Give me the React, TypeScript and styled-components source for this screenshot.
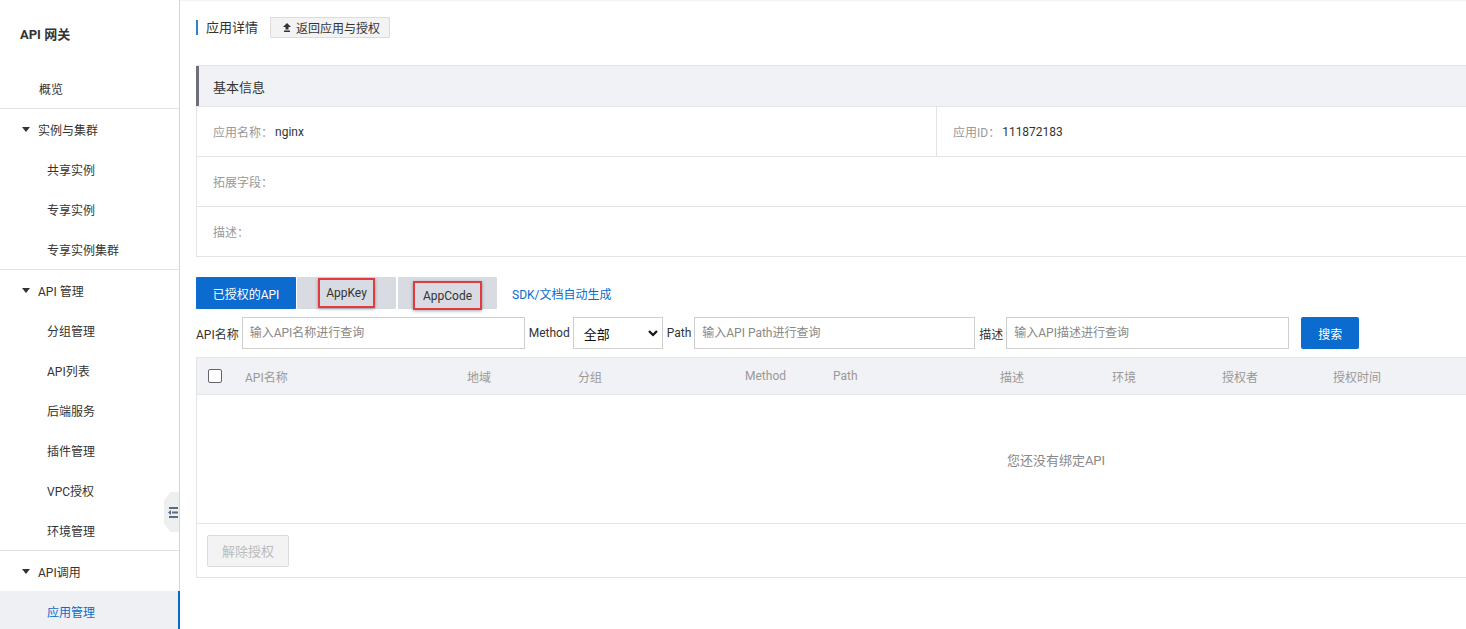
import { FC } from 'react';
import styled, { createGlobalStyle } from 'styled-components';

const GlobalStyle = createGlobalStyle`
  html, body {
    margin: 0;
    padding: 0;
    background: #fff;
    overflow: hidden;
  }
  body {
    font-family: Roboto, "Noto Sans CJK SC", sans-serif;
    font-size: 12px;
    color: #333;
  }
  * {
    box-sizing: border-box;
  }
`;

type NavItem = { label: string; active?: boolean };
type NavGroup = { title?: string; items: NavItem[] };

const nav: NavGroup[] = [
  { items: [{ label: '概览' }] },
  { title: '实例与集群', items: [{ label: '共享实例' }, { label: '专享实例' }, { label: '专享实例集群' }] },
  {
    title: 'API 管理',
    items: [
      { label: '分组管理' },
      { label: 'API列表' },
      { label: '后端服务' },
      { label: '插件管理' },
      { label: 'VPC授权' },
      { label: '环境管理' },
    ],
  },
  { title: 'API调用', items: [{ label: '应用管理', active: true }] },
];

const columns = ['API名称', '地域', '分组', 'Method', 'Path', '描述', '环境', '授权者', '授权时间'];

const App: FC = () => {
  return (
    <>
      <GlobalStyle />
      <Layout>
        <Sidebar>
          <Brand>API 网关</Brand>
          {nav.map((group, gi) => (
            <Group key={gi} last={gi === nav.length - 1}>
              {group.title && (
                <GroupTitle>
                  <Caret />
                  {group.title}
                </GroupTitle>
              )}
              {group.items.map(item => (
                <NavLink key={item.label} sub={!!group.title} active={item.active}>
                  {item.label}
                </NavLink>
              ))}
            </Group>
          ))}
          <CollapseHandle>
            <svg width="10" height="11" viewBox="0 0 10 11">
              <rect x="1" y="0" width="9" height="2" fill="#5b6b82" />
              <rect x="4" y="4.5" width="6" height="2" fill="#5b6b82" />
              <path d="M0 5.5 L3 3 L3 8 Z" fill="#5b6b82" />
              <rect x="1" y="9" width="9" height="2" fill="#5b6b82" />
            </svg>
          </CollapseHandle>
        </Sidebar>

        <Main>
          <TitleRow>
            <PageTitle>应用详情</PageTitle>
            <BackButton>
              <svg width="8" height="9" viewBox="0 0 8 9">
                <path d="M4 0 L8 4 L5.5 4 L5.5 6.5 L2.5 6.5 L2.5 4 L0 4 Z" fill="#333" />
                <rect x="1" y="7.5" width="6" height="1.5" fill="#333" />
              </svg>
              返回应用与授权
            </BackButton>
          </TitleRow>

          <Panel>
            <PanelHeader>基本信息</PanelHeader>
            <InfoRow>
              <InfoCell width="740px" divided>
                <Label>应用名称：</Label>
                <Value>nginx</Value>
              </InfoCell>
              <InfoCell>
                <Label>应用ID：</Label>
                <Value>111872183</Value>
              </InfoCell>
            </InfoRow>
            <InfoRow>
              <InfoCell>
                <Label>拓展字段：</Label>
              </InfoCell>
            </InfoRow>
            <InfoRow>
              <InfoCell>
                <Label>描述：</Label>
              </InfoCell>
            </InfoRow>
          </Panel>

          <Tabs>
            <Tab active>已授权的API</Tab>
            <Tab>
              <Marked>AppKey</Marked>
            </Tab>
            <Tab spaced>
              <Marked tall>AppCode</Marked>
            </Tab>
            <TabLink>SDK/文档自动生成</TabLink>
          </Tabs>

          <FilterRow>
            <FilterLabel>API名称</FilterLabel>
            <TextInput width="283px" placeholder="输入API名称进行查询" />
            <FilterLabel>Method</FilterLabel>
            <Select>
              <span>全部</span>
              <svg width="10" height="7" viewBox="0 0 10 7">
                <path d="M1 1 L5 5 L9 1" stroke="#111" strokeWidth="2.2" fill="none" />
              </svg>
            </Select>
            <FilterLabel>Path</FilterLabel>
            <TextInput width="281px" placeholder="输入API Path进行查询" />
            <FilterLabel>描述</FilterLabel>
            <TextInput width="283px" placeholder="输入API描述进行查询" />
            <SearchButton>搜索</SearchButton>
          </FilterRow>

          <Table>
            <TableHead>
              <HeadCell>
                <Checkbox />
              </HeadCell>
              {columns.map(c => (
                <HeadCell key={c}>{c}</HeadCell>
              ))}
            </TableHead>
            <EmptyBody>您还没有绑定API</EmptyBody>
            <TableFooter>
              <DisabledButton disabled>解除授权</DisabledButton>
            </TableFooter>
          </Table>
        </Main>
      </Layout>
    </>
  );
};

const Layout = styled.div`
  display: flex;
  height: 100vh;
  width: 100vw;
  overflow: hidden;
  box-shadow: inset 0 2px 2px -1px rgba(0, 0, 0, 0.06);
`;

const Sidebar = styled.aside`
  position: relative;
  flex: 0 0 180px;
  border-right: 1px solid #d5d6d8;
  background: #fff;
`;

const Brand = styled.div`
  height: 68px;
  padding: 24px 0 0 20px;
  font-size: 13px;
  font-weight: bold;
  color: #333;
`;

const Group = styled.div<{ last?: boolean }>`
  border-bottom: ${p => (p.last ? 'none' : '1px solid #e2e3e5')};
`;

const GroupTitle = styled.div`
  display: flex;
  align-items: center;
  height: 40px;
  padding-left: 22px;
  color: #333;
`;

const Caret = styled.span`
  width: 0;
  height: 0;
  border-left: 4.5px solid transparent;
  border-right: 4.5px solid transparent;
  border-top: 5px solid #333;
  margin-right: 8px;
`;

const NavLink = styled.div<{ sub?: boolean; active?: boolean }>`
  display: flex;
  align-items: center;
  height: 40px;
  padding-left: ${p => (p.sub ? '47px' : '39px')};
  color: ${p => (p.active ? '#0a6bcc' : '#333')};
  background: ${p => (p.active ? '#eef0f4' : 'transparent')};
  border-right: ${p => (p.active ? '2px solid #0a6bcc' : 'none')};
  margin-right: ${p => (p.active ? '-1px' : '0')};
`;

const CollapseHandle = styled.div`
  position: absolute;
  right: 0;
  top: 492px;
  width: 15px;
  height: 40px;
  background: #eeefef;
  clip-path: polygon(40% 0, 100% 0, 100% 100%, 40% 100%, 0 78%, 0 22%);
  display: flex;
  align-items: center;
  justify-content: flex-end;
  padding-right: 1px;
`;

const Main = styled.main`
  flex: 1;
  min-width: 0;
  padding: 17px 0 0 16px;
  overflow: hidden;
`;

const TitleRow = styled.div`
  display: flex;
  align-items: center;
  gap: 12px;
  height: 21px;
`;

const PageTitle = styled.h1`
  margin: 0;
  font-size: 13px;
  font-weight: normal;
  color: #333;
  border-left: 2px solid #2f80cf;
  padding-left: 8px;
  line-height: 15px;
`;

const BackButton = styled.button`
  display: flex;
  align-items: center;
  gap: 5px;
  height: 21px;
  padding: 0 9px 0 12px;
  border: 1px solid #dcdcdc;
  border-radius: 1px;
  background: #f3f3f3;
  font: inherit;
  color: #333;
`;

const Panel = styled.section`
  width: 1720px;
  margin-top: 27px;
  border: 1px solid #e2e4e8;
`;

const PanelHeader = styled.div`
  height: 40px;
  display: flex;
  align-items: center;
  padding-left: 14px;
  background: #f1f2f5;
  border-left: 3px solid #6f6e7a;
  margin-left: -1px;
  font-size: 13px;
  color: #333;
`;

const InfoRow = styled.div`
  display: flex;
  height: 50px;
  border-top: 1px solid #e2e4e8;
`;

const InfoCell = styled.div<{ width?: string; divided?: boolean }>`
  display: flex;
  align-items: center;
  width: ${p => p.width || 'auto'};
  flex: ${p => (p.width ? 'none' : '1')};
  padding-left: 16px;
  border-right: ${p => (p.divided ? '1px solid #e2e4e8' : 'none')};
`;

const Label = styled.span`
  color: #999;
`;

const Value = styled.span`
  color: #333;
  margin-left: 2px;
`;

const Tabs = styled.div`
  display: flex;
  align-items: stretch;
  margin-top: 20px;
  height: 32px;
`;

const Tab = styled.div<{ active?: boolean; spaced?: boolean }>`
  width: ${p => (p.active ? '100px' : '99px')};
  margin-left: ${p => (p.active ? '0' : p.spaced ? '2px' : '1px')};
  display: flex;
  align-items: center;
  justify-content: center;
  background: ${p => (p.active ? '#0b6bce' : '#d8dce2')};
  color: ${p => (p.active ? '#fff' : '#333')};
  border-radius: 1px;
`;

const Marked = styled.span<{ tall?: boolean }>`
  padding: ${p => (p.tall ? '6px 8px 5px' : '6px 6px')};
  margin-top: ${p => (p.tall ? '4px' : '0')};
  border: 2px solid #e23b3f;
  box-shadow: 0 1px 3px rgba(0, 0, 0, 0.35);
  line-height: 14px;
`;

const TabLink = styled.a`
  display: flex;
  align-items: center;
  margin-left: 15px;
  color: #0a6dcc;
  cursor: pointer;
`;

const FilterRow = styled.div`
  display: flex;
  align-items: center;
  margin-top: 8px;
  height: 32px;
`;

const FilterLabel = styled.span`
  margin: 0 3px 0 4px;
  color: #333;
  &:first-child {
    margin-left: 0;
  }
`;

const TextInput = styled.input<{ width: string }>`
  width: ${p => p.width};
  height: 32px;
  border: 1px solid #cfcfcf;
  padding: 0 7px;
  font: inherit;
  color: #333;
  outline: none;
  &::placeholder {
    color: #888;
  }
`;

const Select = styled.div`
  width: 90px;
  height: 32px;
  border: 1px solid #cfcfcf;
  display: flex;
  align-items: center;
  justify-content: space-between;
  padding: 0 4px 0 10px;
  color: #111;
  font-size: 13px;
`;

const SearchButton = styled.button`
  margin-left: 12px;
  width: 58px;
  height: 32px;
  border: none;
  border-radius: 2px;
  background: #0b6bce;
  color: #fff;
  font: inherit;
`;

const Table = styled.div`
  width: 1720px;
  margin-top: 8px;
  border: 1px solid #e2e4e8;
`;

const TableHead = styled.div`
  display: grid;
  grid-template-columns: 48px 222px 111px 167px 88px 167px 112px 110px 111px 1fr;
  align-items: center;
  height: 37px;
  background: #f1f2f5;
  border-bottom: 1px solid #e2e4e8;
  color: #999;
`;

const HeadCell = styled.div`
  display: flex;
  align-items: center;
  &:first-child {
    padding-left: 11px;
  }
`;

const Checkbox = styled.span`
  width: 14px;
  height: 14px;
  border: 1px solid #666;
  border-radius: 2px;
  background: #fff;
`;

const EmptyBody = styled.div`
  height: 129px;
  display: flex;
  align-items: center;
  justify-content: center;
  color: #888;
  border-bottom: 1px solid #e2e4e8;
  font-size: 13px;
`;

const TableFooter = styled.div`
  height: 53px;
  display: flex;
  align-items: center;
  padding-left: 10px;
`;

const DisabledButton = styled.button`
  width: 82px;
  height: 32px;
  border: 1px solid #dcdcdc;
  border-radius: 2px;
  background: #f3f3f3;
  color: #bbb;
  font: inherit;
  font-size: 13px;
`;

export default App;
